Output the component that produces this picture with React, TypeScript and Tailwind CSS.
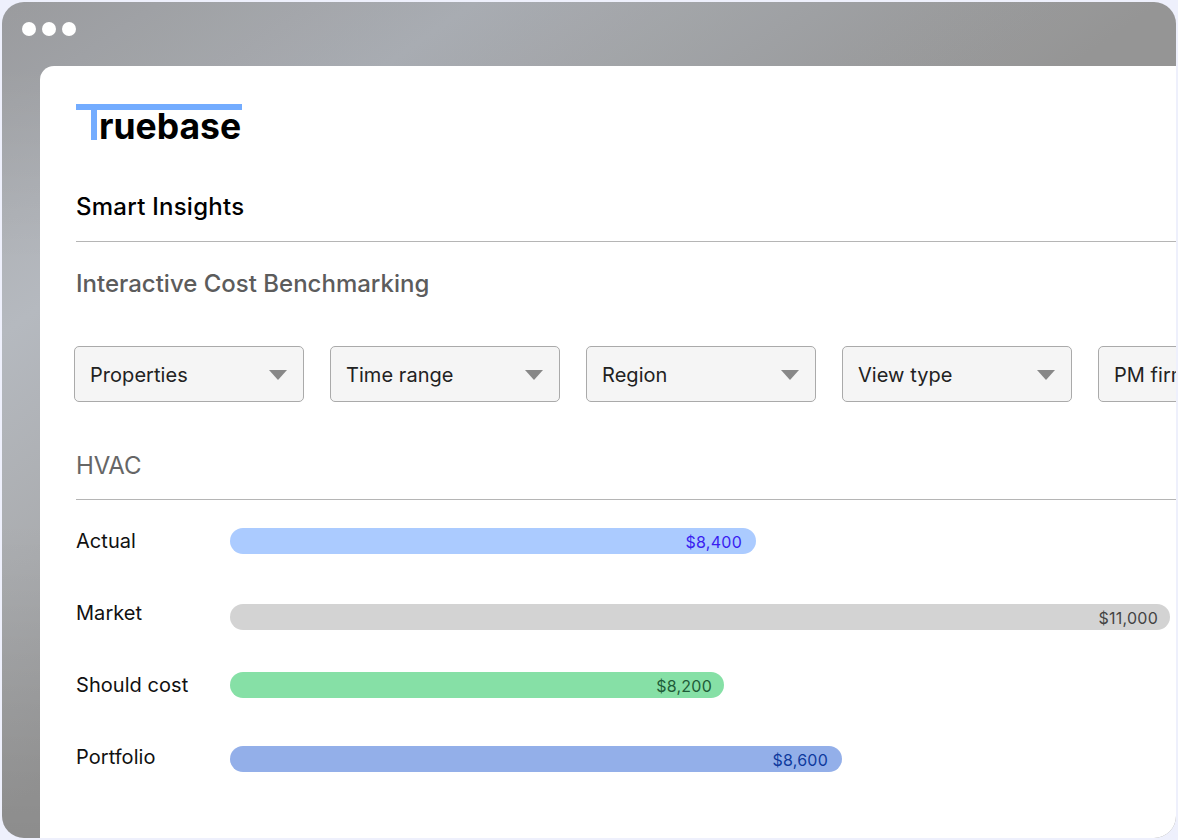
const filters = ["Properties", "Time range", "Region", "View type", "PM firm"]

const bars = [
  { label: "Actual", value: "$8,400", width: "w-[526px]", bar: "bg-[#abcbff]", text: "text-[#3a1ff0]", offset: "mt-0", pad: "pr-3.5" },
  { label: "Market", value: "$11,000", width: "w-[940px]", bar: "bg-[#d3d3d3]", text: "text-[#444444]", offset: "mt-1", pad: "pr-3" },
  { label: "Should cost", value: "$8,200", width: "w-[494px]", bar: "bg-[#86e0a6]", text: "text-[#1f5c38]", offset: "mt-0", pad: "pr-3" },
  { label: "Portfolio", value: "$8,600", width: "w-[612px]", bar: "bg-[#93afe9]", text: "text-[#0f3a9e]", offset: "mt-0.5", pad: "pr-3.5" },
]

function Logo() {
  return (
    <div className="w-[166px]">
      <div className="h-1.5 bg-[#73acff]" />
      <div className="flex h-[30px] items-end">
        <div className="ml-[15px] h-[30px] w-1.5 shrink-0 bg-[#73acff]" />
        <span className="ml-0.5 text-[35.5px] leading-[27px] font-bold whitespace-nowrap text-black">ruebase</span>
      </div>
    </div>
  )
}

function FilterSelect({ label }: { label: string }) {
  return (
    <div className="flex h-14 w-[230px] shrink-0 items-center justify-between rounded-[5px] border border-[#aaaaaa] bg-[#f5f5f5] pr-4 pl-[15px]">
      <span className="mt-0.5 text-[20px] tracking-[0.05px] whitespace-nowrap text-[#222222]">{label}</span>
      <div className="mt-0.5 h-0 w-0 border-x-[9.5px] border-t-[10px] border-x-transparent border-t-[#888888]" />
    </div>
  )
}

export default function App() {
  return (
    <div className="h-[840px] w-[1178px] overflow-hidden bg-[#eef0fc] p-0.5 font-['Inter',sans-serif]">
      <div className="relative flex h-full flex-col overflow-hidden rounded-[22px] bg-[linear-gradient(180deg,rgba(0,0,0,0.07)_0px,rgba(0,0,0,0.07)_66px,rgba(0,0,0,0)_260px,rgba(0,0,0,0)_520px,rgba(0,0,0,0.12)_100%),linear-gradient(145deg,#a6a7aa_0%,#b5b9bf_20%,#a0a0a0_49%,#a0a0a0_100%)] pt-16 pl-[38px]">
        <div className="absolute top-5 left-5 flex gap-1.5">
          <div className="h-3.5 w-3.5 rounded-full bg-white" />
          <div className="h-3.5 w-3.5 rounded-full bg-white" />
          <div className="h-3.5 w-3.5 rounded-full bg-white" />
        </div>
        <div className="flex-1 overflow-hidden rounded-tl-[14px] bg-white pt-[38px] pl-9">
          <Logo />
          <h1 className="mt-[51px] text-[24px] leading-8 font-medium tracking-[0.25px] text-black">Smart Insights</h1>
          <div className="mt-[18px] border-t border-[#b5b5b5]" />
          <h2 className="mt-[26px] text-[24px] leading-8 font-medium text-[#5c5c5c]">Interactive Cost Benchmarking</h2>
          <div className="mt-[46px] -ml-0.5 flex gap-[26px]">
            {filters.map((f) => (
              <FilterSelect key={f} label={f} />
            ))}
          </div>
          <h2 className="mt-12 text-[24px] leading-8 tracking-[-0.2px] text-[#666666]">HVAC</h2>
          <div className="mt-[17px] border-t border-[#b5b5b5]" />
          <div className="mt-7 flex flex-col">
            {bars.map((b) => (
              <div key={b.label} className="flex h-[72px] items-start">
                <div className="flex h-[26px] w-[154px] shrink-0 items-center text-[20px] tracking-[0.05px] text-[#111111]">{b.label}</div>
                <div className={`flex h-[26px] items-center justify-end rounded-full ${b.width} ${b.bar} ${b.offset} ${b.pad}`}>
                  <span className={`mt-0.5 text-[16px] tracking-[0.25px] ${b.text}`}>{b.value}</span>
                </div>
              </div>
            ))}
          </div>
        </div>
      </div>
    </div>
  )
}
